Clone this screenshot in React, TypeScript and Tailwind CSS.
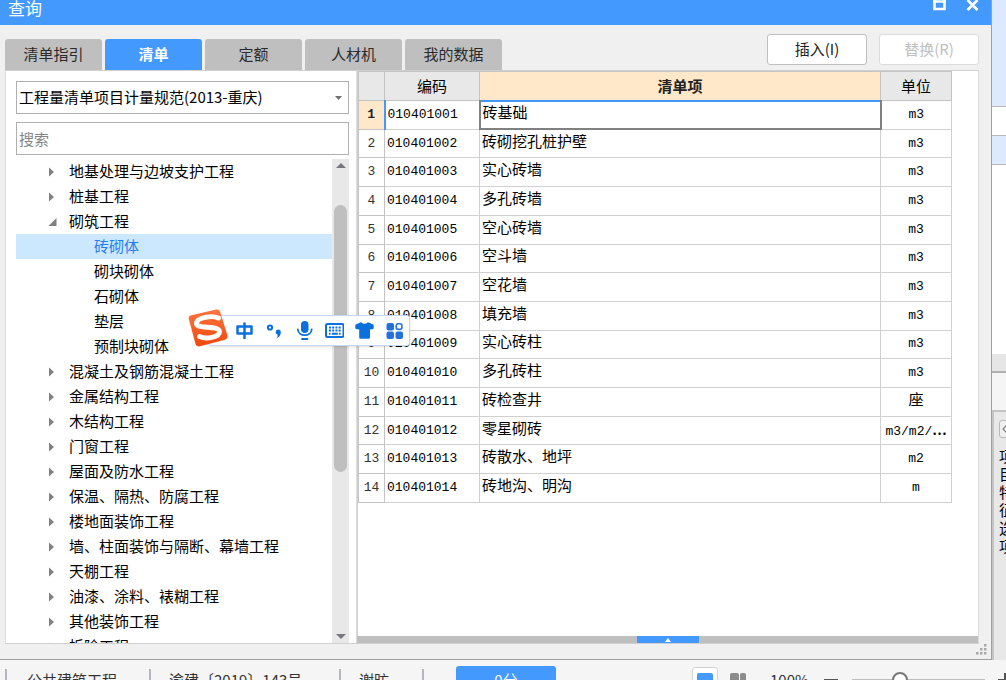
import { useState } from "react";

const tabs = ["清单指引", "清单", "定额", "人材机", "我的数据"];

type Node = { label: string; kind: "closed" | "open" | "leaf" };

const tree: Node[] = [
  { label: "地基处理与边坡支护工程", kind: "closed" },
  { label: "桩基工程", kind: "closed" },
  { label: "砌筑工程", kind: "open" },
  { label: "砖砌体", kind: "leaf" },
  { label: "砌块砌体", kind: "leaf" },
  { label: "石砌体", kind: "leaf" },
  { label: "垫层", kind: "leaf" },
  { label: "预制块砌体", kind: "leaf" },
  { label: "混凝土及钢筋混凝土工程", kind: "closed" },
  { label: "金属结构工程", kind: "closed" },
  { label: "木结构工程", kind: "closed" },
  { label: "门窗工程", kind: "closed" },
  { label: "屋面及防水工程", kind: "closed" },
  { label: "保温、隔热、防腐工程", kind: "closed" },
  { label: "楼地面装饰工程", kind: "closed" },
  { label: "墙、柱面装饰与隔断、幕墙工程", kind: "closed" },
  { label: "天棚工程", kind: "closed" },
  { label: "油漆、涂料、裱糊工程", kind: "closed" },
  { label: "其他装饰工程", kind: "closed" },
  { label: "拆除工程", kind: "closed" },
];

const rows: [string, string, string][] = [
  ["010401001", "砖基础", "m3"],
  ["010401002", "砖砌挖孔桩护壁", "m3"],
  ["010401003", "实心砖墙", "m3"],
  ["010401004", "多孔砖墙", "m3"],
  ["010401005", "空心砖墙", "m3"],
  ["010401006", "空斗墙", "m3"],
  ["010401007", "空花墙", "m3"],
  ["010401008", "填充墙", "m3"],
  ["010401009", "实心砖柱", "m3"],
  ["010401010", "多孔砖柱", "m3"],
  ["010401011", "砖检查井", "座"],
  ["010401012", "零星砌砖", "m3/m2/⋯"],
  ["010401013", "砖散水、地坪", "m2"],
  ["010401014", "砖地沟、明沟", "m"],
];

function TitleBar() {
  return (
    <header className="flex h-[25px] shrink-0 items-start bg-[#4499ff] pl-2 pr-3 text-white">
      <h1 className="flex-1 text-[17px] leading-[15px]">查询</h1>
      <button aria-label="最大化" className="mr-5">
        <svg width="13" height="12" viewBox="0 0 13 12" className="block">
          <path d="M1.5 0V9H11.5V0M0 1.5H13" fill="none" stroke="white" strokeWidth="2.6" />
        </svg>
      </button>
      <button aria-label="关闭">
        <svg width="13" height="12" viewBox="0 0 13 12" className="block">
          <path d="M1.5 0 11.5 10M11.5 0 1.5 10" fill="none" stroke="white" strokeWidth="2.6" />
        </svg>
      </button>
    </header>
  );
}

function TabRow() {
  const [active, setActive] = useState("清单");
  return (
    <div className="flex h-[45px] shrink-0 items-end pl-[5px] pr-3">
      <div role="tablist" className="flex flex-1 gap-[3px]">
        {tabs.map((t) => (
          <button
            key={t}
            role="tab"
            aria-selected={t === active}
            onClick={() => setActive(t)}
            className={
              t === active
                ? "h-[31px] w-[97px] rounded-t-[3px] bg-[#4499ff] text-[15px] font-bold text-white"
                : "h-[31px] w-[97px] rounded-t-[3px] bg-[#bfbfbf] text-[15px] text-[#2b2b2b]"
            }
          >
            {t}
          </button>
        ))}
      </div>
      <div className="flex gap-3 pb-[5px]">
        <button className="h-[31px] w-[100px] rounded-[3px] border border-[#bfbfbf] bg-white text-[15px] text-[#222]">
          插入(I)
        </button>
        <button
          disabled
          className="h-[31px] w-[100px] rounded-[3px] border border-[#dcdcdc] bg-white text-[15px] text-[#c0c0c0]"
        >
          替换(R)
        </button>
      </div>
    </div>
  );
}

function Arrow({ kind }: { kind: Node["kind"] }) {
  if (kind === "leaf") return <span className="w-[35px] shrink-0" />;
  return (
    <svg width="10" height="10" viewBox="0 0 10 10" className="shrink-0 fill-[#808080]">
      {kind === "open" ? <path d="M8.5 1V9H0.5Z" /> : <path d="M1 0.500V9.500L6 5Z" />}
    </svg>
  );
}

function TreePanel() {
  const [selected, setSelected] = useState("砖砌体");
  return (
    <section className="flex w-[352px] shrink-0 flex-col border-x border-[#dcdcdc] bg-white pl-[10px] pr-[7px] pt-[10px]">
      <div className="relative">
        <select
          aria-label="计量规范"
          className="block h-[33px] w-full appearance-none border border-[#b0b0b0] bg-white pl-0.5 text-[15px] text-black"
        >
          <option>工程量清单项目计量规范(2013-重庆)</option>
        </select>
        <svg width="7" height="4" viewBox="0 0 7 4" className="pointer-events-none absolute right-[7px] top-[15px] fill-[#707070]">
          <path d="M0 0H7L3.500 4Z" />
        </svg>
      </div>
      <input
        aria-label="搜索"
        placeholder="搜索"
        className="mt-2 block h-[33px] w-full shrink-0 border border-[#b0b0b0] px-0.5 text-[15px] placeholder:text-[#858585]"
      />
      <div className="mt-1 flex min-h-0 flex-1">
        <ul className="min-w-0 flex-1 overflow-hidden">
          {tree.map((n) => (
            <li key={n.label}>
              <button
                onClick={() => setSelected(n.label)}
                className={
                  n.label === selected
                    ? "flex h-[25px] w-full items-center gap-[11px] bg-[#cce8ff] pl-8 text-[15px] text-[#2a7df0]"
                    : "flex h-[25px] w-full items-center gap-[11px] pl-8 text-[15px] text-black"
                }
              >
                <Arrow kind={n.kind} />
                {n.label}
              </button>
            </li>
          ))}
        </ul>
        <div className="flex w-[17px] flex-col items-center bg-[#e8e8e8] py-1">
          <svg width="10" height="5" viewBox="0 0 10 5" className="fill-[#77777f]">
            <path d="M5 0 10 5H0Z" />
          </svg>
          <div className="mt-[37px] h-[267px] w-[13px] rounded-full bg-[#bfbfbf]" />
          <svg width="10" height="5" viewBox="0 0 10 5" className="mt-auto fill-[#77777f]">
            <path d="M0 0H10L5 5Z" />
          </svg>
        </div>
      </div>
    </section>
  );
}

function ItemTable() {
  return (
    <section className="flex min-w-0 flex-1 flex-col border-r border-[#dcdcdc] bg-white">
      <div className="min-h-0 flex-1 border-l border-[#d0d0d0] pr-[26px]">
        <table className="h-[432px] w-full table-fixed border-collapse text-[15px] text-black">
          <colgroup>
            <col className="w-[26px]" />
            <col className="w-[95px]" />
            <col />
            <col className="w-[71px]" />
          </colgroup>
          <thead>
            <tr className="h-[29px] bg-[#e8e8e8]">
              <th aria-label="行号" className="border border-[#c4c4c4] p-0" />
              <th className="border border-[#c4c4c4] p-0 font-normal leading-5">编码</th>
              <th className="border border-[#c4c4c4] bg-[#ffe8ca] p-0 font-bold leading-5 text-[#222]">清单项</th>
              <th className="border border-[#c4c4c4] p-0 font-normal leading-5">单位</th>
            </tr>
          </thead>
          <tbody className="font-['Liberation_Mono','Noto_Sans_CJK_SC',monospace]">
            {rows.map(([code, name, unit], i) => (
              <tr key={code} className="h-[28px]">
                <th
                  scope="row"
                  className={
                    i === 0
                      ? "border border-[#c4c4c4] border-r-2 border-r-[#4499ff] bg-[#ffe8ca] p-0 text-[13px] font-bold leading-5 text-[#222]"
                      : "border border-[#c4c4c4] p-0 text-[13px] font-normal leading-5 text-[#333]"
                  }
                >
                  {i + 1}
                </th>
                <td className="border border-[#d0d0d0] p-0 pl-0.5 text-[13px] leading-5">{code}</td>
                <td
                  className={
                    i === 0
                      ? "border-2 border-[#808080] border-t-[#4499ff] p-0 pl-0.5 leading-5"
                      : "border border-[#d0d0d0] p-0 pl-0.5 leading-5"
                  }
                >
                  {name}
                </td>
                <td
                  className={
                    unit === "座"
                      ? "border border-[#d0d0d0] p-0 text-center leading-5"
                      : "border border-[#d0d0d0] p-0 text-center text-[13px] leading-5"
                  }
                >
                  {unit.replace("⋯", "")}
                  {unit.endsWith("⋯") && <span className="font-['Noto_Sans_CJK_SC',sans-serif] font-bold">⋯</span>}
                </td>
              </tr>
            ))}
          </tbody>
        </table>
      </div>
      <div className="flex h-[7px] shrink-0 justify-center bg-[#bfbfbf]">
        <button aria-label="展开" className="flex h-full w-[62px] items-center justify-center bg-[#4499ff]">
          <svg width="6" height="4" viewBox="0 0 6 4" className="fill-white">
            <path d="M3 0 6 4H0Z" />
          </svg>
        </button>
      </div>
    </section>
  );
}

function SideStrip() {
  return (
    <aside className="flex w-[14px] shrink-0 flex-col overflow-hidden bg-white">
      <div className="h-[107px] shrink-0 border-b border-[#b8b8b8] bg-[#dce9ff]" />
      <div className="h-[28px] shrink-0" />
      <div className="h-[30px] shrink-0 border-y border-[#b8b8b8] bg-[#dce9ff]" />
      <div className="h-[189px] shrink-0" />
      <div className="h-[19px] shrink-0 border-b-2 border-[#b0b0b0] bg-[#e6e6e6]" />
      <div className="h-[37px] shrink-0 bg-[#f5f5f5]" />
      <div className="flex flex-1 flex-col items-start border-l-2 border-t-2 border-[#c4c4c4] bg-[#e8e8e8] pl-[5px] pt-2">
        <button aria-label="收起" className="flex h-[18px] w-[18px] shrink-0 items-center rounded-[3px] border border-[#b8b8b8] bg-[#f0f0f0] pl-[2px]">
          <svg width="10" height="10" viewBox="0 0 10 10">
            <path d="M5 1 1 5 5 9M9 1 5 5 9 9" fill="none" stroke="#888" strokeWidth="1.3" />
          </svg>
        </button>
        <div className="mt-[9px] w-4 break-all text-[15px] leading-[18px] text-black">项目特征选项</div>
      </div>
    </aside>
  );
}

function StatusBar() {
  return (
    <footer className="h-5 shrink-0 overflow-hidden bg-[#f5f5f5] text-[15px] text-[#333]">
      <div className="flex h-10 items-center whitespace-nowrap pl-[5px]">
        <span className="flex h-[22px] w-36 items-center border-l-2 border-[#b4b8bc] pl-5">公共建筑工程</span>
        <span className="flex h-[22px] w-[190px] items-center border-l-2 border-[#b4b8bc] pl-[18px]">
          渝建〔2019〕143号
        </span>
        <span className="flex h-[22px] w-[85px] items-center border-x-2 border-[#b4b8bc] pl-[18px]">谢昉</span>
        <button className="ml-8 h-[28px] w-[100px] rounded-[3px] bg-[#4499ff] text-white">0分</button>
        <div className="ml-auto flex items-center">
          <button aria-label="单栏" className="flex h-[26px] w-[26px] items-center justify-center rounded-[3px] border border-[#d4d4d4] bg-white">
            <span className="h-[15px] w-4 rounded-[2px] bg-[#4499ff]" />
          </button>
          <button aria-label="双栏" className="ml-3 flex w-4 gap-px">
            <span className="h-[15px] w-[9px] rounded-[2px] bg-[#8c8c8c]" />
            <span className="h-[15px] w-[6px] rounded-[2px] bg-[#8c8c8c]" />
          </button>
          <span className="ml-6 w-[54px]">100%</span>
          <button aria-label="缩小" className="flex h-4 w-[14px] items-center">
            <span className="h-[2px] w-full bg-[#555]" />
          </button>
          <input
            type="range"
            aria-label="缩放"
            defaultValue={34}
            className="ml-[14px] h-4 w-[133px] appearance-none bg-[linear-gradient(#bdbdbd,#bdbdbd)] bg-size-[100%_2px] bg-center bg-no-repeat [&::-webkit-slider-thumb]:h-4 [&::-webkit-slider-thumb]:w-4 [&::-webkit-slider-thumb]:appearance-none [&::-webkit-slider-thumb]:rounded-full [&::-webkit-slider-thumb]:border-2 [&::-webkit-slider-thumb]:border-[#777] [&::-webkit-slider-thumb]:bg-white"
          />
          <button aria-label="放大" className="ml-[13px] flex w-2 overflow-hidden">
            <svg width="14" height="14" viewBox="0 0 14 14" className="shrink-0">
              <path d="M0 7H14M7 0V14" stroke="#555" strokeWidth="2" />
            </svg>
          </button>
        </div>
      </div>
    </footer>
  );
}

function InputMethodBar() {
  return (
    <div className="absolute left-[188px] top-[308px] flex h-10 items-center">
      <div className="absolute inset-x-0 bottom-[2px] left-5 top-[7px] rounded-[3px] border border-[#c4d6f0] bg-white shadow-sm" />
      <svg width="41" height="40" viewBox="0 0 41 40" className="relative">
        <defs>
          <linearGradient id="brand" x1="0" y1="0" x2="0" y2="1">
            <stop offset="0" stopColor="#ff7440" />
            <stop offset="1" stopColor="#f0480c" />
          </linearGradient>
        </defs>
        <path
          d="M2.500 7.500 28 1.500Q31 1 32 3.500L39.300 27Q40 30.500 37 31.700L12 38.300Q8.500 39 7.500 36L.7 10.500Q.3 8.200 2.500 7.500Z"
          fill="url(#brand)"
        />
        <path
          d="M30.500 10C24 7 8.500 9.500 8.500 15.500C8.500 21.500 31.500 17 31.500 23.500C31.500 29.500 18 31.500 11.500 28.500"
          fill="none"
          stroke="white"
          strokeWidth="5"
          strokeLinecap="round"
        />
      </svg>
      <div className="relative flex items-center gap-[11px] pl-[6px] pr-[6px] pt-1 text-[#0b6fdc]">
        <button aria-label="中文" className="h-[19px] w-[19px]">
          <svg width="19" height="19" viewBox="0 0 19 19" fill="none" stroke="currentColor" strokeWidth="2.500">
            <path d="M2.500 5.500H16.500V12.500H2.500ZM9.500 1.500V18" strokeLinejoin="round" />
          </svg>
        </button>
        <button aria-label="标点" className="h-[19px] w-[19px]">
          <svg width="19" height="19" viewBox="0 0 19 19">
            <circle cx="5" cy="6.500" r="2.100" fill="none" stroke="currentColor" strokeWidth="2" />
            <path d="M13 8.500A2.700 2.700 0 0 1 15.800 11.500Q15.800 15.500 11.500 17.300Q13 15.500 12.600 13.600A2.600 2.600 0 0 1 13 8.500Z" fill="currentColor" />
          </svg>
        </button>
        <button aria-label="语音" className="h-[19px] w-[19px]">
          <svg width="19" height="19" viewBox="0 0 19 19">
            <rect x="6" y="0" width="7.500" height="12" rx="3.750" fill="currentColor" />
            <path d="M2.800 8.500C3.500 16 16 16 16.700 8.500M7 18H12.500" fill="none" stroke="currentColor" strokeWidth="1.800" strokeLinecap="round" />
          </svg>
        </button>
        <button aria-label="键盘" className="h-[19px] w-[19px]">
          <svg width="19" height="19" viewBox="0 0 19 19">
            <rect x="1" y="3" width="17.500" height="13" rx="1.500" fill="none" stroke="currentColor" strokeWidth="2" />
            <path d="M4 6.500H6M7.200 6.500H9.200M10.400 6.500H12.400M13.600 6.500H15.600M4 9.500H6M7.200 9.500H9.200M10.400 9.500H12.400M13.600 9.500H15.600M4 12.700H5.500M6.700 12.700H12.800M14 12.700H15.600" stroke="currentColor" strokeWidth="1.900" />
          </svg>
        </button>
        <button aria-label="皮肤" className="h-[19px] w-[19px]">
          <svg width="19" height="19" viewBox="0 0 19 19">
            <path d="M6 1.200Q9.500 4.500 13 1.200L18.300 3.500Q19.200 5 18.400 8L15 8.500V16.500Q15 17.800 13.700 17.800H5.500Q4.200 17.800 4.200 16.500V8.500L.7 8Q-.2 5 .7 3.500Z" fill="currentColor" />
          </svg>
        </button>
        <button aria-label="工具箱" className="h-[19px] w-[19px]">
          <svg width="19" height="19" viewBox="0 0 19 19" fill="#2470dc">
            <rect x="1.500" y="2" width="7.500" height="7.500" rx="2" />
            <rect x="1.500" y="10.500" width="7.500" height="7.500" rx="2" />
            <rect x="10.500" y="10.500" width="7.500" height="7.500" rx="2" />
            <rect x="11.300" y="2.800" width="5.600" height="5.600" rx="1.800" fill="white" stroke="#2470dc" strokeWidth="1.600" />
          </svg>
        </button>
      </div>
    </div>
  );
}

export default function App() {
  return (
    <div className="relative flex h-screen flex-col overflow-hidden bg-white font-['Noto_Sans_CJK_SC',sans-serif]">
      <div className="flex min-h-0 flex-1">
        <main className="flex min-w-0 flex-1 flex-col border-b border-r border-[#a0a0a0] bg-[#f0f0f0]">
          <TitleBar />
          <TabRow />
          <div className="ml-[5px] mr-3 flex min-h-0 flex-1 border-y border-[#d0d0d0]">
            <TreePanel />
            <ItemTable />
          </div>
          <div className="flex h-[15px] shrink-0 justify-end pr-1">
            <svg width="11" height="11" viewBox="0 0 11 11" className="fill-[#a8a8a8]">
              <path d="M8 0H10.500V2.500H8ZM4 4H6.500V6.500H4ZM8 4H10.500V6.500H8ZM0 8H2.500V10.500H0ZM4 8H6.500V10.500H4ZM8 8H10.500V10.500H8Z" />
            </svg>
          </div>
        </main>
        <SideStrip />
      </div>
      <StatusBar />
      <InputMethodBar />
    </div>
  );
}
